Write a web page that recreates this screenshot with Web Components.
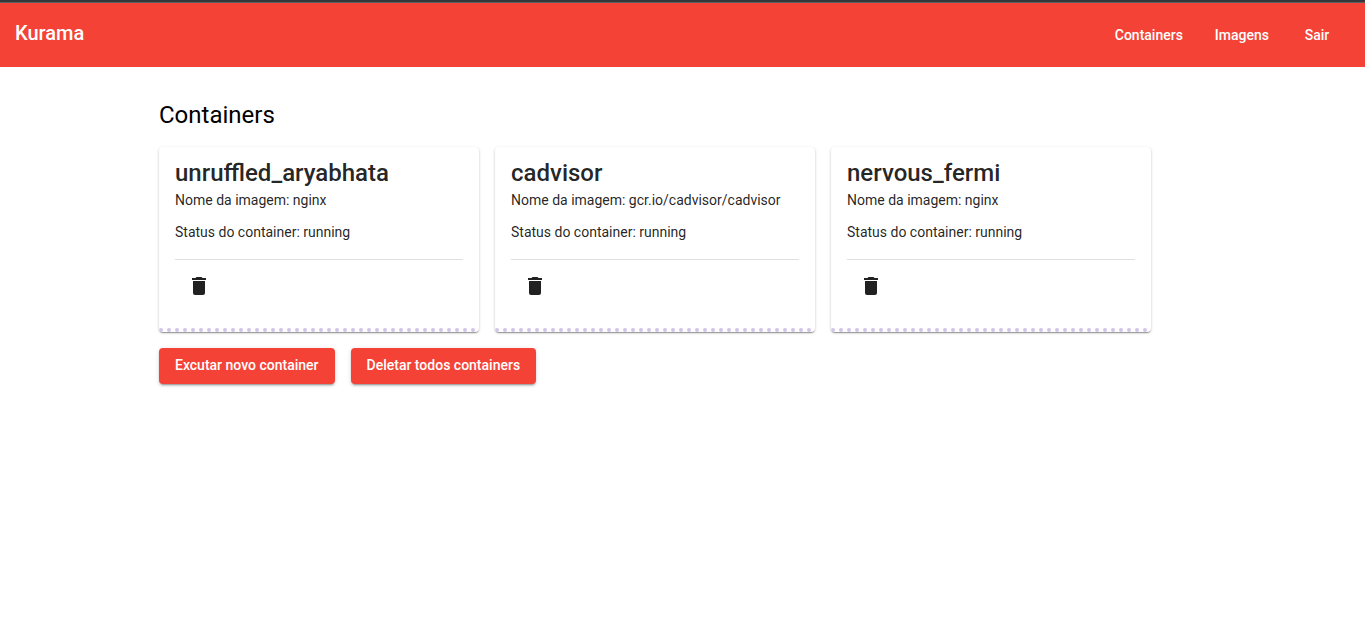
<!DOCTYPE html>
<html lang="pt-BR">
<head>
<meta charset="utf-8">
<meta name="viewport" content="width=device-width, initial-scale=1">
<title>Kurama</title>
<style>
  body { margin: 0; background: #fff; font-family: Roboto, sans-serif; font-size: 14px; }
</style>
</head>
<body>
<kurama-app></kurama-app>

<template id="app-template">
  <style>
    :host { display: block; }
    main { max-width: 1047px; margin: 0 auto; padding: 32px 16px 16px; }
    h1 { margin: 0 0 16px; font-size: 24px; line-height: 32px; font-weight: 400; color: #000; }
    .cards, .actions { display: flex; flex-wrap: wrap; gap: 16px; }
    .actions { margin-top: 16px; }
    @media (min-width: 1100px) { main { padding-left: 0; padding-right: 0; } }
  </style>
  <kurama-toolbar>
    Kurama
    <kurama-nav-link slot="nav" href="#containers">Containers</kurama-nav-link>
    <kurama-nav-link slot="nav" href="#imagens">Imagens</kurama-nav-link>
    <kurama-nav-link slot="nav" href="#sair">Sair</kurama-nav-link>
  </kurama-toolbar>
  <main>
    <h1>Containers</h1>
    <div class="cards">
      <container-card>
        unruffled_aryabhata
        <span slot="image">nginx</span>
        <span slot="status">running</span>
      </container-card>
      <container-card>
        cadvisor
        <span slot="image">gcr.io/cadvisor/cadvisor</span>
        <span slot="status">running</span>
      </container-card>
      <container-card>
        nervous_fermi
        <span slot="image">nginx</span>
        <span slot="status">running</span>
      </container-card>
    </div>
    <div class="actions">
      <kurama-button>Excutar novo container</kurama-button>
      <kurama-button>Deletar todos containers</kurama-button>
    </div>
  </main>
</template>

<template id="toolbar-template">
  <style>
    :host { display: block; background: #f44336; color: #fff; border-top: 2px solid #36373a; }
    header { display: flex; align-items: center; justify-content: space-between; flex-wrap: wrap;
      min-height: 64px; padding: 0 16px 0 15px; border-top: 1px solid #5f6063; }
    .brand { font-size: 20px; line-height: 32px; font-weight: 500; padding-bottom: 4px; }
    nav { display: flex; }
  </style>
  <header>
    <div class="brand"><slot></slot></div>
    <nav><slot name="nav"></slot></nav>
  </header>
</template>

<template id="nav-link-template">
  <style>
    :host { display: block; }
    a { display: block; box-sizing: border-box; min-width: 64px; padding: 0 16px; text-align: center;
      font-size: 14px; line-height: 36px; font-weight: 500; color: inherit; text-decoration: none; }
  </style>
  <a><slot></slot></a>
</template>

<template id="card-template">
  <style>
    :host { display: block; box-sizing: border-box; width: 320px; max-width: 100%; border-radius: 4px;
      overflow: hidden; background: #fff; color: rgba(0, 0, 0, .87);
      box-shadow: 0 2px 1px -1px rgba(0, 0, 0, .2), 0 1px 1px 0 rgba(0, 0, 0, .14), 0 1px 3px 0 rgba(0, 0, 0, .2); }
    .body { padding: 10px 16px 22px; }
    h2 { margin: 0; font-size: 24px; line-height: 32px; font-weight: 500; }
    p { margin: 0 0 10px; font-size: 14px; line-height: 22px; }
    .rule { margin: 16px 0 6px; border: 0; border-top: 1px solid rgba(0, 0, 0, .12); }
    button { display: flex; align-items: center; justify-content: center; width: 48px; height: 40px;
      padding: 0; border: 0; background: none; color: inherit; cursor: pointer; }
    svg { display: block; width: 24px; height: 24px; fill: currentColor; }
    .dots { width: 100%; height: 4px; color: #d1c4e9; }
  </style>
  <div class="body">
    <h2><slot></slot></h2>
    <p>Nome da imagem: <slot name="image"></slot></p>
    <p>Status do container: <slot name="status"></slot></p>
    <hr class="rule">
    <button type="button" aria-label="Deletar container">
      <svg viewBox="0 0 24 24" aria-hidden="true"><path d="M6 19c0 1.100.9 2 2 2h8c1.100 0 2-.9 2-2V7H6v12zM19 4h-3.500l-1-1h-5l-1 1H5v2h14V4z"/></svg>
    </button>
  </div>
  <svg class="dots" aria-hidden="true">
    <defs><pattern id="dot" width="8" height="4" patternUnits="userSpaceOnUse"><circle cx="2" cy="2" r="2" fill="currentColor"/></pattern></defs>
    <rect width="100%" height="4" fill="url(#dot)"/>
  </svg>
</template>

<template id="button-template">
  <style>
    :host { display: block; }
    button { display: block; min-width: 64px; padding: 0 16px 2px; border: 0; border-radius: 4px; cursor: pointer;
      background: #f44336; color: #fff; font-family: inherit; font-size: 14px; line-height: 34px; font-weight: 500;
      box-shadow: 0 3px 1px -2px rgba(0, 0, 0, .2), 0 2px 2px 0 rgba(0, 0, 0, .14), 0 1px 5px 0 rgba(0, 0, 0, .12); }
  </style>
  <button type="button"><slot></slot></button>
</template>

<script>
  class TemplateElement extends HTMLElement {
    constructor() {
      super();
      const template = document.getElementById(this.constructor.templateId);
      this.attachShadow({ mode: "open" }).append(template.content.cloneNode(true));
    }
  }
  class KuramaNavLink extends TemplateElement {
    static templateId = "nav-link-template";
    connectedCallback() {
      this.shadowRoot.querySelector("a").href = this.getAttribute("href") || "#";
    }
  }
  customElements.define("kurama-nav-link", KuramaNavLink);
  customElements.define("kurama-toolbar", class extends TemplateElement { static templateId = "toolbar-template"; });
  customElements.define("container-card", class extends TemplateElement { static templateId = "card-template"; });
  customElements.define("kurama-button", class extends TemplateElement { static templateId = "button-template"; });
  customElements.define("kurama-app", class extends TemplateElement { static templateId = "app-template"; });
</script>
</body>
</html>
